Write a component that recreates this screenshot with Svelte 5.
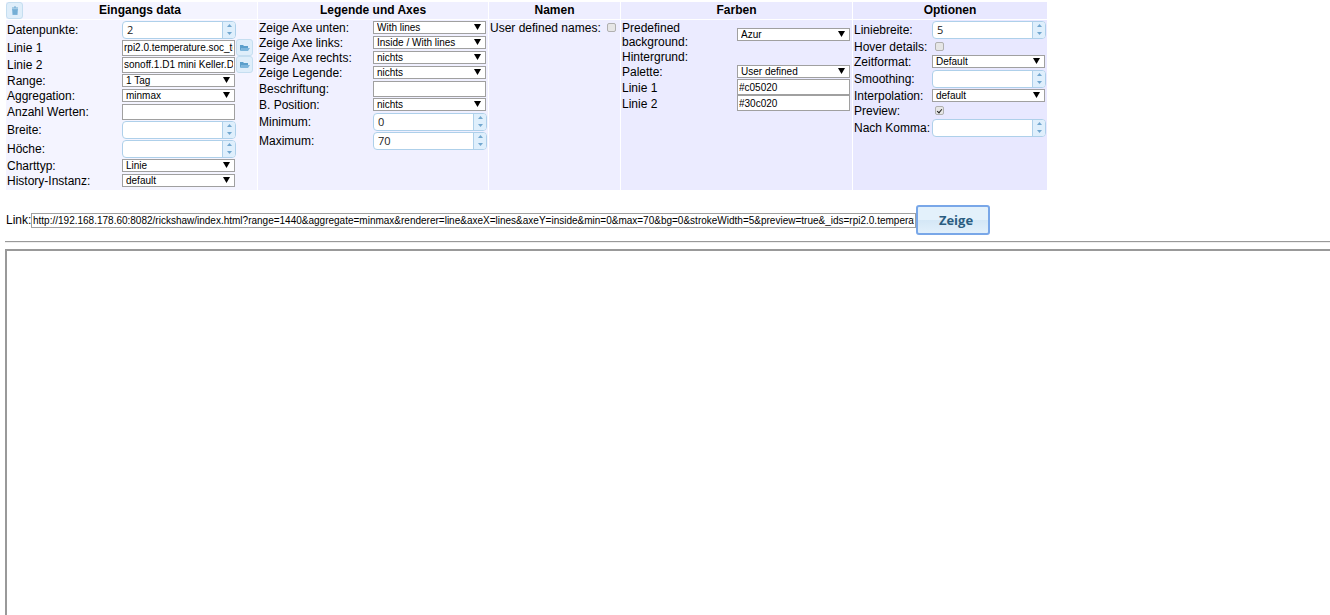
<script>
  const panels = [
    {
      id: 'input',
      title: 'Eingangs data',
      fields: [
        { label: 'Datenpunkte:', type: 'spinner', value: '2' },
        { label: 'Linie 1', type: 'state', value: 'rpi2.0.temperature.soc_temp' },
        { label: 'Linie 2', type: 'state', value: 'sonoff.1.D1 mini Keller.DS18B20_Temperature' },
        { label: 'Range:', type: 'select', value: '1 Tag' },
        { label: 'Aggregation:', type: 'select', value: 'minmax' },
        { label: 'Anzahl Werten:', type: 'text', value: '' },
        { label: 'Breite:', type: 'spinner', value: '' },
        { label: 'Höche:', type: 'spinner', value: '' },
        { label: 'Charttyp:', type: 'select', value: 'Linie' },
        { label: 'History-Instanz:', type: 'select', value: 'default' }
      ]
    },
    {
      id: 'axes',
      title: 'Legende und Axes',
      fields: [
        { label: 'Zeige Axe unten:', type: 'select', value: 'With lines' },
        { label: 'Zeige Axe links:', type: 'select', value: 'Inside / With lines' },
        { label: 'Zeige Axe rechts:', type: 'select', value: 'nichts' },
        { label: 'Zeige Legende:', type: 'select', value: 'nichts' },
        { label: 'Beschriftung:', type: 'text', value: '' },
        { label: 'B. Position:', type: 'select', value: 'nichts' },
        { label: 'Minimum:', type: 'spinner', value: '0' },
        { label: 'Maximum:', type: 'spinner', value: '70' }
      ]
    },
    {
      id: 'names',
      title: 'Namen',
      fields: [{ label: 'User defined names:', type: 'checkbox', value: false }]
    },
    {
      id: 'colors',
      title: 'Farben',
      fields: [
        { label: 'Predefined background:', type: 'select', value: 'Azur' },
        { label: 'Hintergrund:', type: 'none' },
        { label: 'Palette:', type: 'select', value: 'User defined' },
        { label: 'Linie 1', type: 'color', value: '#c05020' },
        { label: 'Linie 2', type: 'color', value: '#30c020' }
      ]
    },
    {
      id: 'options',
      title: 'Optionen',
      fields: [
        { label: 'Liniebreite:', type: 'spinner', value: '5' },
        { label: 'Hover details:', type: 'checkbox', value: false },
        { label: 'Zeitformat:', type: 'select', value: 'Default' },
        { label: 'Smoothing:', type: 'spinner', value: '' },
        { label: 'Interpolation:', type: 'select', value: 'default' },
        { label: 'Preview:', type: 'checkbox', value: true },
        { label: 'Nach Komma:', type: 'spinner', value: '' }
      ]
    }
  ];

  let link = 'http://192.168.178.60:8082/rickshaw/index.html?range=1440&aggregate=minmax&renderer=line&axeX=lines&axeY=inside&min=0&max=70&bg=0&strokeWidth=5&preview=true&_ids=rpi2.0.temperature.soc_temp';

  let rows = panels;

  // Spinner buttons change the field in place, so reassign to refresh
  const spin = (field, delta) => {
    field.value = String((Number(field.value) || 0) + delta);
    rows = [...rows];
  };
</script>

<main>
  <div class="panels">
    {#each rows as panel}
      <section class="panel {panel.id}">
        <header>
          {#if panel.id === 'input'}
            <button class="icon-btn" type="button" aria-label="Löschen">
              <svg width="8" height="10" viewBox="0 0 8 10">
                <path d="M1 3h6l-.5 6h-5z" fill="#7fb5da" />
                <path d="M1 2h6M3 1h2M3 4v4M5 4v4" stroke="#6ba8d0" fill="none" />
              </svg>
            </button>
          {/if}
          <h2>{panel.title}</h2>
        </header>
        <div class="fields">
          {#each panel.fields as field, i}
            <div class="row {field.type}">
              <label for="{panel.id}-{i}">{field.label}</label>
              {#if field.type === 'select'}
                <span class="select-box">
                  <select id="{panel.id}-{i}">
                    <option>{field.value}</option>
                  </select>
                  <svg class="arrow" width="7" height="6" viewBox="0 0 7 6"><path d="M0 0h7L3.5 6z" /></svg>
                </span>
              {:else if field.type === 'spinner'}
                <span class="spin-box">
                  <input id="{panel.id}-{i}" type="text" bind:value={field.value} />
                  <span class="steps">
                    <button type="button" aria-label="mehr" on:click={() => spin(field, 1)}>
                      <svg width="5" height="3" viewBox="0 0 5 3"><path d="M0 3h5L2.5 0z" /></svg>
                    </button>
                    <button type="button" aria-label="weniger" on:click={() => spin(field, -1)}>
                      <svg width="5" height="3" viewBox="0 0 5 3"><path d="M0 0h5L2.5 3z" /></svg>
                    </button>
                  </span>
                </span>
              {:else if field.type === 'checkbox'}
                <input id="{panel.id}-{i}" type="checkbox" bind:checked={field.value} />
              {:else if field.type !== 'none'}
                <input id="{panel.id}-{i}" class="text-box" type="text" bind:value={field.value} />
                {#if field.type === 'state'}
                  <button class="icon-btn" type="button" aria-label="{field.label} auswählen">
                    <svg width="10" height="8" viewBox="0 0 10 8">
                      <path d="M0 7V1h3l1 1h4v2H2z" fill="#5b9fcb" />
                      <path d="M2 4h8L8 7H0z" fill="#7db6dc" />
                    </svg>
                  </button>
                {/if}
              {/if}
            </div>
          {/each}
        </div>
      </section>
    {/each}
  </div>

  <div class="link-row">
    <label for="link">Link:</label>
    <input id="link" class="text-box" type="text" bind:value={link} />
    <button class="show" type="button">Zeige</button>
  </div>

  <hr />
  <section class="preview" aria-label="Preview"></section>
</main>

<style>
  :global(body) {
    margin: 0;
    background: #fff;
  }

  main {
    display: flex;
    flex-direction: column;
    box-sizing: border-box;
    min-height: 100vh;
    padding: 2px 0 0 5px;
    color: #000;
    font-family: "Liberation Sans", Arial, sans-serif;
    font-size: 12px;
  }

  input, select, button {
    box-sizing: border-box;
    margin: 0;
    font-family: inherit;
  }

  .panels {
    display: flex;
    gap: 1px;
    padding-left: 1px;
  }

  .panel {
    display: flex;
    flex-direction: column;
    gap: 1px;
    flex: none;
  }

  .input { --bg: #f4f4ff; --label: 115px; width: 251px; }
  .axes { --bg: #f0f0ff; --label: 114px; width: 230px; }
  .names { --bg: #eeeeff; --label: 117px; width: 131px; }
  .colors { --bg: #ebebff; --label: 115px; width: 231px; }
  .options { --bg: #e8e8ff; --label: 78px; width: 194px; }

  header {
    display: flex;
    align-items: center;
    height: 17px;
    background: var(--bg);
  }

  h2 {
    flex: 1;
    margin: 0;
    padding-bottom: 2px;
    font-size: 12px;
    line-height: 14px;
    text-align: center;
  }

  .fields {
    flex: 1;
    padding: 0 0 2px 1px;
    background: var(--bg);
  }

  .row {
    display: flex;
    align-items: center;
    min-height: 15px;
  }

  .row.spinner { min-height: 19px; }
  .row.state, .row.text { min-height: 17px; }
  .row.color { min-height: 16px; }

  .row label {
    flex: none;
    box-sizing: border-box;
    width: var(--label);
    line-height: 14px;
    white-space: nowrap;
  }

  .colors .row label {
    padding: 1px 30px 0 0;
    white-space: normal;
  }

  .select-box {
    position: relative;
    display: flex;
    width: 113px;
  }

  select {
    width: 100%;
    height: 13px;
    padding: 0 3px;
    border: 1px solid #a0a0a0;
    border-radius: 0;
    appearance: none;
    background: #fff;
    color: #000;
    font-size: 10px;
    line-height: 11px;
  }

  .arrow {
    position: absolute;
    top: 3px;
    right: 5px;
    pointer-events: none;
  }

  .text-box {
    width: 113px;
    height: 16px;
    padding: 0 1px;
    border: 1px solid #a0a0a0;
    background: #fff;
    color: #000;
    font-size: 10px;
  }

  .spin-box {
    display: flex;
    box-sizing: border-box;
    width: 114px;
    height: 18px;
    overflow: hidden;
    border: 1px solid #aed0ea;
    border-radius: 4px;
    background: #fff;
  }

  .spin-box input {
    flex: 1;
    min-width: 0;
    padding: 0 4px;
    border: 0;
    background: none;
    color: #222;
    font-family: "Open Sans", sans-serif;
    font-size: 11px;
  }

  .steps {
    display: flex;
    flex-direction: column;
    width: 12px;
    border-left: 1px solid #aed0ea;
    background: #dfeffc;
  }

  .steps button {
    display: flex;
    flex: 1;
    align-items: center;
    justify-content: center;
    padding: 0;
    border: 0;
    background: none;
  }

  .steps svg {
    fill: #72a7cf;
  }

  input[type="checkbox"] {
    display: grid;
    place-items: center;
    width: 9px;
    height: 9px;
    border: 1px solid #b0b0b0;
    border-radius: 2px;
    appearance: none;
    background: #e6e6e6;
  }

  .options input[type="checkbox"] {
    margin-left: 3px;
  }

  input[type="checkbox"]:checked::before {
    content: "";
    width: 2px;
    height: 4px;
    border: solid #222;
    border-width: 0 1px 1px 0;
    transform: rotate(40deg);
  }

  .icon-btn {
    display: flex;
    align-items: center;
    justify-content: center;
    flex: none;
    width: 17px;
    height: 17px;
    padding: 0;
    border: 1px solid #c5def0;
    border-radius: 3px;
    background: #dfeefa;
  }

  .state .icon-btn {
    margin-left: 1px;
  }

  .link-row {
    display: flex;
    align-items: center;
    margin-top: 15px;
    padding-left: 1px;
  }

  .link-row label {
    width: 25px;
    padding-bottom: 1px;
  }

  .link-row .text-box {
    flex: 0 1 885px;
    min-width: 0;
    height: 15px;
  }

  .show {
    flex: none;
    width: 74px;
    height: 30px;
    padding: 0 0 0 6px;
    border: 2px solid #79a7e8;
    border-radius: 3px;
    background: linear-gradient(#e3f1fb 50%, #d4e7f6 50%, #e2f0fb);
    color: #2b5d81;
    font-family: "Open Sans", sans-serif;
    font-size: 13px;
    font-weight: bold;
  }

  hr {
    width: 100%;
    box-sizing: border-box;
    height: 2px;
    margin: 6px 0;
    border: 0;
    border-top: 1px solid #999;
    border-bottom: 1px solid #eee;
  }

  .preview {
    flex: 1;
    border: solid #999;
    border-width: 2px 0 0 2px;
  }
</style>
